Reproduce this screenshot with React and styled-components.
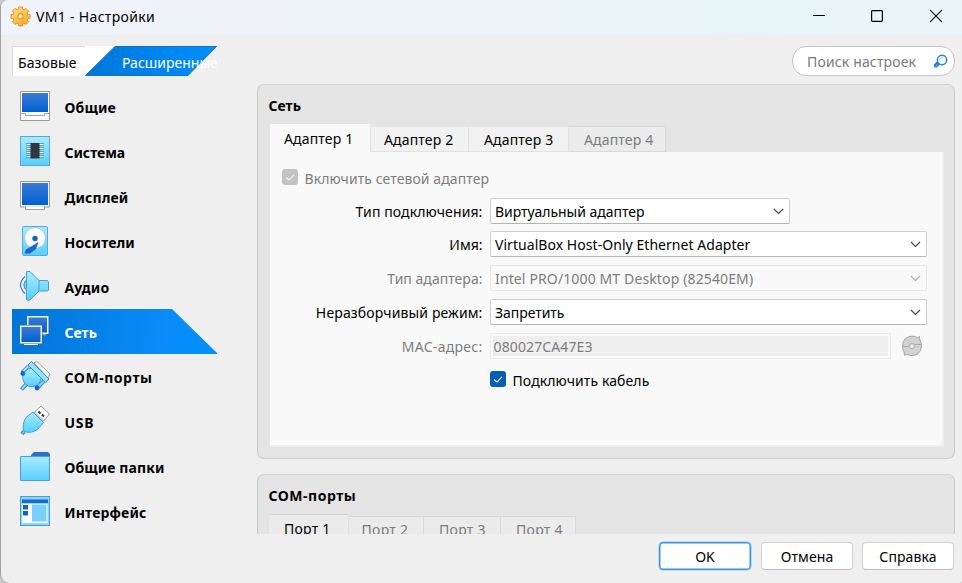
import React from 'react';
import styled, { createGlobalStyle, css } from 'styled-components';

const Global = createGlobalStyle`
  *, *::before, *::after { box-sizing: border-box; }
  html, body { margin: 0; padding: 0; background: #c9c9c9; overflow: hidden; }
  body { font-family: "Noto Sans", "Open Sans", sans-serif; font-size: 14px; line-height: 20px; color: #000; }
  button, input { font: inherit; }
  svg { display: block; flex: none; }
`;

const Window = styled.div`
  width: 962px;
  height: 583px;
  display: flex;
  flex-direction: column;
  background: #efefef;
  border-left: 1px solid #a3a3a3;
  border-radius: 8px 0 3px 9px;
  overflow: hidden;
`;

const TitleBar = styled.header`
  height: 35px;
  flex: none;
  display: flex;
  align-items: center;
  padding: 0 19px 3px 8.5px;
  background: linear-gradient(90deg, #f0f3f9 0%, #eef3f9 45%, #e8f5f8 75%, #e9f5f9 100%);
`;

const Title = styled.h1`
  flex: 1;
  margin: 1px 0 0 4.5px;
  font-size: 14px;
  font-weight: 400;
  letter-spacing: 0.32px;
`;

const WindowControls = styled.div`
  display: flex;
  gap: 45px;
`;

const Label = styled.span`
  white-space: nowrap;
  letter-spacing: ${(p) => p.$track || 0}px;
`;

const Content = styled.div`
  height: 499px;
  flex: none;
  display: grid;
  grid-template-columns: 205px 698px;
  grid-template-rows: 49px 450px;
  column-gap: 40px;
  padding-left: 11px;
`;

const ModeSwitch = styled.div`
  display: flex;
  height: 30px;
  margin-top: 11px;
  background: linear-gradient(#fff, #fff) no-repeat 0 0 / 104px 100%;
  border-left: 1px solid #dcdcdc;
  overflow: hidden;
`;

const ModeBasic = styled.div`
  width: 72px;
  flex: none;
  padding: 6px 0 0 5px;
  border-top: 1px solid #dcdcdc;
`;

const ModeAdvanced = styled.div`
  width: 132px;
  flex: none;
  display: grid;
  overflow: hidden;
  background: #efefef;
  > * { grid-area: 1 / 1; }
`;

const ModeText = styled(Label)`
  padding: 7px 0 0 37px;
  color: #fff;
`;

const SearchBox = styled.div`
  justify-self: end;
  width: 163px;
  height: 30px;
  margin-top: 11px;
  display: flex;
  align-items: center;
  justify-content: space-between;
  padding: 1px 6px 0 14px;
  background: #fff;
  border: 1px solid #c6c6c6;
  border-radius: 14px;
  color: #7a7a7a;
`;

const Sidebar = styled.nav`
  display: flex;
  flex-direction: column;
`;

const NavItem = styled.div`
  height: 45px;
  display: flex;
  align-items: center;
  gap: 13.5px;
  padding: 0 0 2px 7px;
  font-weight: 700;
  ${(p) => p.$active && css`
    color: #fff;
    background: linear-gradient(100deg, #0074d4 0%, #0a8cfb 75%, #0090ff 100%);
    clip-path: polygon(0 0, 160px 0, 100% 44px, 100% 45px, 0 45px);
  `}
`;

const NavText = styled(Label)`
  padding-top: 4px;
`;

const Main = styled.main`
  display: flex;
  flex-direction: column;
  gap: 15px;
  overflow: hidden;
`;

const Panel = styled.section`
  height: 375px;
  flex: none;
  padding: 11px 10px 0 11px;
  background: #e4e4e4;
  border: 1px solid #cacaca;
  border-top-color: #d3d3d3;
  border-radius: 7px;
`;

const PanelTitle = styled.h2`
  height: 20px;
  margin: 0 0 0 -0.5px;
  font-size: 14px;
  font-weight: 700;
`;

const TabBar = styled.div`
  display: flex;
  align-items: flex-end;
  height: 28px;
  margin-top: 8px;
  padding-left: ${(p) => (p.$flush ? 0 : 1)}px;
`;

const Tab = styled.div`
  width: ${(p) => p.$w}px;
  height: 26px;
  padding: 3px 0 0 ${(p) => p.$pad}px;
  background: #f1f1f1;
  border-top: 1px solid #e7e7e7;
  border-right: 1px solid #e1e1e1;
  border-bottom: 1px solid #e1e1e1;
  ${(p) => p.$disabled && css`
    background: #ebebeb;
    border-color: #d9d9d9;
    color: #7c7c7c;
  `}
  ${(p) => p.$selected && css`
    height: 28px;
    padding-top: 4px;
    background: ${p.$muted ? '#ebebeb' : '#f9f9f9'};
    border-top-color: ${p.$muted ? '#d7d7d7' : '#f9f9f9'};
    border-bottom: 0;
  `}
`;

const TabPage = styled.div`
  width: 674px;
  height: 295px;
  margin-left: 1px;
  padding: 15px 0 0 12px;
  background: #f9f9f9;
  border-right: 2px solid #efefef;
  border-bottom: 2px solid #ececec;
`;

const CheckRow = styled.div`
  display: flex;
  gap: 6.5px;
  height: 22px;
  color: ${(p) => (p.$disabled ? '#7d7d7d' : '#000')};
`;

const CheckMark = styled.span`
  width: 16px;
  height: 16px;
  margin-top: 2px;
  flex: none;
  border-radius: 3px;
  background: ${(p) => (p.$disabled ? '#c3c3c3' : '#005fb8')};
`;

const CheckText = styled(Label)`
  padding-top: 2px;
`;

const Form = styled.div`
  display: grid;
  grid-template-columns: 200.5px 437px;
  grid-template-rows: 33px 34px 34px 34px 36px 22px;
  column-gap: 7.5px;
  margin-top: 9px;
`;

const FieldLabel = styled.div`
  text-align: right;
  padding-top: 4px;
  color: ${(p) => (p.$disabled ? '#7d7d7d' : '#000')};
`;

const Select = styled.div`
  width: ${(p) => p.$w || 437}px;
  height: 26px;
  display: flex;
  align-items: center;
  justify-content: space-between;
  padding: 1px 5px 0 4px;
  background: ${(p) => (p.$disabled ? '#f9f9f9' : '#fff')};
  color: ${(p) => (p.$disabled ? '#7d7d7d' : '#000')};
  border: 1px solid ${(p) => (p.$disabled ? '#e7e7e7' : '#cecece')};
  border-bottom-color: ${(p) => (p.$disabled ? '#e7e7e7' : '#b5b5b5')};
  border-radius: 2px;
  > svg { margin-bottom: 1px; }
`;

const MacRow = styled.div`
  display: flex;
  align-items: flex-start;
  gap: 10px;
  > svg { margin-top: 2px; }
`;

const MacField = styled.div`
  width: 401px;
  height: 26px;
  padding: 3px 0 0 2.5px;
  border: 1px solid #ebebeb;
  box-shadow: inset 0 0 0 2px #f9f9f9;
  background: #eee;
  color: #7d7d7d;
`;

const FormFoot = styled.div`
  grid-column: 2;
`;

const Footer = styled.footer`
  display: flex;
  justify-content: flex-end;
  gap: 10px;
  padding: 8px 8px 0 0;
`;

const Button = styled.button`
  width: 92px;
  height: 28px;
  padding: 1px 0 0;
  background: #fff;
  color: #000;
  border: 1px solid #d0d0d0;
  border-bottom-color: #bcbcbc;
  border-radius: 4px;
  line-height: 20px;
  &:last-child { margin-left: -1px; }
  ${(p) => p.$primary && css`
    border-color: #3c96dc;
    box-shadow: inset 0 0 0 0.5px #3c96dc, 0 0 0 0.5px #8cc3ee;
  `}
`;

/* ---------- icons ---------- */

const Defs = () => (
  <svg width="0" height="0">
    <defs>
      <linearGradient id="cyan" x1="0" y1="0" x2="0" y2="1">
        <stop offset="0" stopColor="#a9ecfd" /><stop offset="1" stopColor="#55cffd" />
      </linearGradient>
      <linearGradient id="screen" x1="0" y1="0" x2="0" y2="1">
        <stop offset="0" stopColor="#3a7ad6" /><stop offset="1" stopColor="#0060d0" />
      </linearGradient>
      <linearGradient id="gear" x1="0" y1="0" x2="0.6" y2="1">
        <stop offset="0" stopColor="#ffe685" /><stop offset="1" stopColor="#fbab2c" />
      </linearGradient>
      <linearGradient id="mode" x1="0" y1="0" x2="1" y2="0">
        <stop offset="0" stopColor="#0076d8" /><stop offset="1" stopColor="#008fff" />
      </linearGradient>
    </defs>
  </svg>
);

const HiddenDefs = styled.div`
  height: 0;
  overflow: hidden;
`;

const ModeShape = () => (
  <svg width="132" height="30">
    <path d="M0 0H30L0 30Z" fill="#fff" />
    <path d="M0.5 29.5L30 0.5H131.5L103 29.5Z" fill="url(#mode)" stroke="#1673c2" strokeWidth="1" />
  </svg>
);

const gearPoints = Array.from({ length: 32 }, (_, i) => {
  const r = i % 4 < 2 ? 9.7 : 7.6;
  const step = Math.floor(i / 4) * (Math.PI / 4);
  const a = step + [-0.2, 0.2, 0.3, 0.49][i % 4];
  return `${(10.5 + r * Math.cos(a)).toFixed(2)},${(10.5 + r * Math.sin(a)).toFixed(2)}`;
}).join(' ');

const GearIcon = () => (
  <svg width="22" height="21" viewBox="0 0 22 21">
    <polygon points={gearPoints} fill="url(#gear)" stroke="#ec932b" strokeWidth="1" strokeLinejoin="round" />
    <circle cx="10.5" cy="10.3" r="3" fill="#fbb637" stroke="#e8912a" strokeWidth="0.8" />
    <circle cx="10.5" cy="10.3" r="1.7" fill="#f4f1ee" />
  </svg>
);

const GeneralIcon = () => (
  <svg width="32" height="32" viewBox="0 0 32 32">
    <path d="M1.5 1.5H30.5V30.5H1.5Z" fill="#fff" stroke="#9c9c9c" />
    <rect x="3" y="3" width="26" height="19" fill="url(#screen)" />
    <path d="M2 23.5H6.5V25.5H25.5V23.5H30" fill="none" stroke="#a2a2a2" />
  </svg>
);

const SystemIcon = () => (
  <svg width="32" height="32" viewBox="0 0 32 32">
    <rect x="1.5" y="1.5" width="29" height="29" fill="url(#cyan)" stroke="#5aa5e6" />
    {[9, 13, 17, 21].map((y) => (
      <g key={y}>
        <path d={`M7 ${y + 0.5}H25`} stroke="#5b9fc5" strokeWidth="3" />
        <path d={`M7.5 ${y + 0.5}H24.5`} stroke="#f4fbff" strokeWidth="1.2" />
      </g>
    ))}
    <rect x="11.5" y="8" width="9" height="15.5" fill="#32363f" />
  </svg>
);

const DisplayIcon = () => (
  <svg width="32" height="32" viewBox="0 0 32 32">
    <rect x="1.5" y="1.5" width="29" height="25.5" fill="#f5f3ef" stroke="#9f9f9f" />
    <path d="M6.5 26.5V29.5H25.5V26.5" fill="#fff" stroke="#a0a0a0" />
    <rect x="3" y="3" width="26" height="22" fill="url(#screen)" />
  </svg>
);

const StorageIcon = () => (
  <svg width="32" height="32" viewBox="0 0 32 32">
    <rect x="3.5" y="1.5" width="25" height="29" rx="1" fill="url(#cyan)" stroke="#5aa5e6" />
    <circle cx="16" cy="13" r="10.5" fill="#fff" stroke="#a5ccea" />
    <circle cx="16" cy="13.5" r="2.7" fill="#1262c8" />
    <path d="M19.5 17L17 24L11 28.5H5.5L7 24.5Z" fill="#1669cf" />
  </svg>
);

const AudioIcon = () => (
  <svg width="32" height="32" viewBox="0 0 32 32">
    <path d="M6 6.5Q-3 15 6 23.5" fill="none" stroke="#3a7cc9" strokeWidth="1.2" />
    <path d="M8 11H6Q3.5 15 6 19H8" fill="#78cdf7" stroke="#4d93cf" />
    <path d="M7.5 1.5H11L20 10.5H28.5L29.5 12V20L28.5 21H20L11 30H7.5Z" fill="url(#cyan)" stroke="#4c9ad4" />
    <path d="M20 10.5V21" stroke="#4c9ad4" />
  </svg>
);

const NetworkIcon = () => (
  <svg width="32" height="32" viewBox="0 0 32 32">
    <path d="M23.5 19V20.5H27V19" fill="#f5f3ef" stroke="#53677f" strokeWidth="0.6" />
    <rect x="9" y="2" width="21" height="17.5" fill="#4a6078" />
    <rect x="8" y="1" width="21.500" height="18" fill="#f4f1ec" />
    <rect x="9.500" y="2.500" width="18.500" height="15" fill="url(#screen)" />
    <path d="M5.500 28V30.500H20V28" fill="#4a6078" />
    <path d="M5 27V30H19V27" fill="#f4f1ec" />
    <rect x="1" y="10" width="22.500" height="19" fill="#4a6078" />
    <rect x="1" y="10.500" width="22" height="18" fill="#f4f1ec" />
    <rect x="2.500" y="12" width="19" height="15" fill="url(#screen)" />
  </svg>
);

const SerialIcon = () => (
  <svg width="32" height="32" viewBox="0 0 32 32">
    <path d="M15 3L18 1.5L31 14L29 18Z" fill="#fff" stroke="#9b9b9b" />
    <path d="M7.5 24L2.5 29.5" stroke="#3f85cb" strokeWidth="4" />
    <path d="M7.5 24L3 29" stroke="#7cd8fa" strokeWidth="2" />
    <circle cx="13" cy="17.5" r="9.3" fill="url(#cyan)" stroke="#4299da" />
    <path d="M9.5 6L3 12.5" stroke="#3f85cb" strokeWidth="3.6" />
    <path d="M9.5 6L3.5 12" stroke="#9be6fc" strokeWidth="1.8" />
    <path d="M25 21L19 27.5" stroke="#3f85cb" strokeWidth="3.6" />
    <path d="M25 21L19 27" stroke="#74d8fc" strokeWidth="1.8" />
    <circle cx="3.8" cy="13.5" r="2.4" fill="#1765c8" />
    <circle cx="18" cy="28" r="2.4" fill="#1765c8" />
    <path d="M12.5 1.5L9 5L26.5 22.5L30 19Z" fill="#95e2fb" stroke="#3d87cf" />
  </svg>
);

const UsbIcon = () => (
  <svg width="32" height="32" viewBox="0 0 32 32">
    <path d="M15.5 7L22 1L30.5 9L24.5 16Z" fill="#fff" stroke="#9b9b9b" />
    <path d="M19.5 6.5L21.5 8.5M23 9.5L25 11.5" stroke="#333" strokeWidth="2" />
    <path d="M5 26.5L3 29" stroke="#3a83ce" strokeWidth="4" />
    <path d="M14 7L24.5 17.5L19 24Q12 29 5 26.5Q2.5 20 7 12.5Z" fill="url(#cyan)" stroke="#4799dc" />
    <path d="M5 26.5L3.3 28.7" stroke="#66c4f6" strokeWidth="2" />
  </svg>
);

const FolderIcon = () => (
  <svg width="32" height="32" viewBox="0 0 32 32">
    <path d="M12 7V5L15 2H29L31 4V10H12Z" fill="#2970d0" />
    <path d="M1.5 6.5H30.5V30.5H1.5Z" fill="url(#cyan)" stroke="#4a9de2" />
  </svg>
);

const InterfaceIcon = () => (
  <svg width="32" height="32" viewBox="0 0 32 32">
    <rect x="1.5" y="1.5" width="29" height="29" fill="#82d9fb" stroke="#4b9bd6" />
    <rect x="3" y="4.5" width="26" height="3.5" fill="#1c69c8" />
    <rect x="3" y="9" width="25.5" height="19" fill="#fff" />
    <rect x="4" y="10" width="5" height="4.5" fill="#0f62cc" />
    <rect x="4" y="16" width="5" height="4.5" fill="#0f62cc" />
    <rect x="13" y="9.5" width="14.5" height="17" fill="#78cffc" />
  </svg>
);

const SearchIcon = () => (
  <svg width="15" height="15" viewBox="0 0 15 15">
    <path d="M5 9.5L3 11.5" stroke="#1d74d4" strokeWidth="4.2" strokeLinecap="round" />
    <path d="M4 11L3 12" stroke="#60bcf5" strokeWidth="1.5" strokeLinecap="round" />
    <circle cx="9" cy="6" r="4.7" fill="#edf9ff" stroke="#2482dc" strokeWidth="1.5" />
    <path d="M6.5 6Q7 3.5 9.5 3.5" fill="none" stroke="#9bdcfb" />
  </svg>
);

const Chevron = ({ faded }) => (
  <svg width="11" height="7" viewBox="0 0 11 7">
    <path d="M1 1L5.5 5.5L10 1" fill="none" stroke={faded ? '#b0b0b0' : '#444'} strokeWidth="1.1" />
  </svg>
);

const Tick = ({ faded }) => (
  <svg width="16" height="16" viewBox="0 0 16 16">
    <path d="M4 8.5L7 11L12 5.8" fill="none" stroke={faded ? '#f5f5f5' : '#fff'} strokeWidth="1.1" />
  </svg>
);

const RefreshIcon = () => (
  <svg width="22" height="22" viewBox="0 0 22 22">
    <path d="M1.5 11Q1.5 6 4.5 3.5Q7.5 1.2 11 1.2Q14 1.2 16.5 2.5L18.5 1.5L18.8 5Q21 8 20.5 12Q20 16 17 18.7Q14.5 20.5 11 20.5Q8 20.5 6 19.5L3.5 20.5L3.2 17Q1.5 14.5 1.5 11Z" fill="#d2d2d2" stroke="#a6a6a6" />
    <path d="M1.5 11.5H8Q8 8.5 11 8.5Q12.5 8.5 13.5 9.5H20M14 10.5Q13.5 13.5 11 13.5Q9.5 13.5 8.5 12.5" fill="none" stroke="#a9a9a9" />
    <path d="M9 11.5L11 9.5L13 11.5L11 13Z" fill="#f7f7f7" />
  </svg>
);

const MinimizeIcon = () => (
  <svg width="14" height="14" viewBox="0 0 14 14"><path d="M2 6.5H14" stroke="#000" /></svg>
);
const MaximizeIcon = () => (
  <svg width="14" height="14" viewBox="0 0 14 14"><rect x="1.6" y="1.6" width="10.8" height="10.8" rx="0.8" fill="none" stroke="#000" strokeWidth="1.2" /></svg>
);
const CloseIcon = () => (
  <svg width="14" height="14" viewBox="0 0 14 14"><path d="M1.2 1.2L12.8 12.8M12.8 1.2L1.2 12.8" stroke="#000" strokeWidth="1.1" /></svg>
);

/* ---------- data ---------- */

const sections = [
  { text: 'Общие', icon: GeneralIcon, track: 0.15 },
  { text: 'Система', icon: SystemIcon, track: -0.05 },
  { text: 'Дисплей', icon: DisplayIcon, track: 0.1 },
  { text: 'Носители', icon: StorageIcon, track: 0.1 },
  { text: 'Аудио', icon: AudioIcon, track: 0.24 },
  { text: 'Сеть', icon: NetworkIcon, track: 0, active: true },
  { text: 'COM-порты', icon: SerialIcon, track: 0.56 },
  { text: 'USB', icon: UsbIcon, track: 0.7 },
  { text: 'Общие папки', icon: FolderIcon, track: 0.1 },
  { text: 'Интерфейс', icon: InterfaceIcon, track: 0.16 },
];

const adapters = [
  { text: 'Адаптер 1', w: 101, pad: 14, track: 0.15, selected: true },
  { text: 'Адаптер 2', w: 98, pad: 13, track: 0.15 },
  { text: 'Адаптер 3', w: 100, pad: 15, track: 0.15 },
  { text: 'Адаптер 4', w: 97, pad: 15, track: 0.15, disabled: true },
];

const ports = [
  { text: 'Порт 1', w: 80, pad: 15, track: 0.25, selected: true },
  { text: 'Порт 2', w: 75, pad: 12.5, track: 0.3, disabled: true },
  { text: 'Порт 3', w: 77, pad: 15, track: 0.3, disabled: true },
  { text: 'Порт 4', w: 75, pad: 15, track: 0.3, disabled: true },
];

const Tabs = ({ items, flush }) => (
  <TabBar $flush={flush}>
    {items.map((t) => (
      <Tab key={t.text} $w={t.w} $pad={t.pad} $selected={t.selected} $disabled={t.disabled} $muted={flush}>
        <Label $track={t.track}>{t.text}</Label>
      </Tab>
    ))}
  </TabBar>
);

export default function App() {
  return (
    <>
      <Global />
      <HiddenDefs><Defs /></HiddenDefs>
      <Window>
        <TitleBar>
          <GearIcon />
          <Title>VM1 - Настройки</Title>
          <WindowControls>
            <MinimizeIcon />
            <MaximizeIcon />
            <CloseIcon />
          </WindowControls>
        </TitleBar>

        <Content>
          <ModeSwitch>
            <ModeBasic><Label $track={0.12}>Базовые</Label></ModeBasic>
            <ModeAdvanced>
              <ModeShape />
              <ModeText>Расширенные</ModeText>
            </ModeAdvanced>
          </ModeSwitch>
          <SearchBox>
            <Label $track={0.15}>Поиск настроек</Label>
            <SearchIcon />
          </SearchBox>

          <Sidebar>
            {sections.map(({ text, icon: Icon, track, active }) => (
              <NavItem key={text} $active={active}>
                <Icon />
                <NavText $track={track}>{text}</NavText>
              </NavItem>
            ))}
          </Sidebar>

          <Main>
            <Panel>
              <PanelTitle>Сеть</PanelTitle>
              <Tabs items={adapters} />
              <TabPage>
                <CheckRow $disabled>
                  <CheckMark $disabled><Tick faded /></CheckMark>
                  <CheckText $track={0.08}>Включить сетевой адаптер</CheckText>
                </CheckRow>
                <Form>
                  <FieldLabel><Label $track={0.11}>Тип подключения:</Label></FieldLabel>
                  <Select $w={300}><Label $track={-0.03}>Виртуальный адаптер</Label><Chevron /></Select>

                  <FieldLabel><Label>Имя:</Label></FieldLabel>
                  <Select><Label $track={0.05}>VirtualBox Host-Only Ethernet Adapter</Label><Chevron /></Select>

                  <FieldLabel $disabled><Label $track={0.03}>Тип адаптера:</Label></FieldLabel>
                  <Select $disabled><Label $track={0.13}>Intel PRO/1000 MT Desktop (82540EM)</Label><Chevron faded /></Select>

                  <FieldLabel><Label $track={0.14}>Неразборчивый режим:</Label></FieldLabel>
                  <Select><Label $track={-0.05}>Запретить</Label><Chevron /></Select>

                  <FieldLabel $disabled><Label $track={0.28}>MAC-адрес:</Label></FieldLabel>
                  <MacRow>
                    <MacField><Label $track={0.12}>080027CA47E3</Label></MacField>
                    <RefreshIcon />
                  </MacRow>

                  <FormFoot>
                    <CheckRow>
                      <CheckMark><Tick /></CheckMark>
                      <CheckText $track={0.1}>Подключить кабель</CheckText>
                    </CheckRow>
                  </FormFoot>
                </Form>
              </TabPage>
            </Panel>

            <Panel>
              <PanelTitle><Label $track={0.52}>COM-порты</Label></PanelTitle>
              <Tabs items={ports} flush />
            </Panel>
          </Main>
        </Content>

        <Footer>
          <Button $primary><Label>OK</Label></Button>
          <Button><Label $track={0.1}>Отмена</Label></Button>
          <Button><Label $track={0.1}>Справка</Label></Button>
        </Footer>
      </Window>
    </>
  );
}
